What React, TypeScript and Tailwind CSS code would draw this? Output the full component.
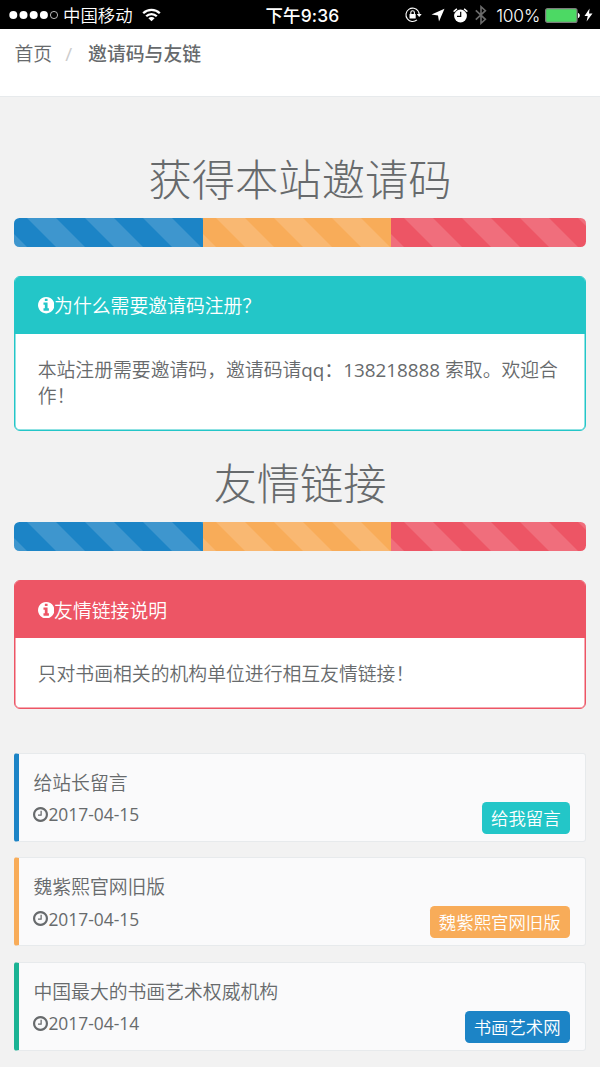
import React from "react";
import { clsx } from "clsx";

type Tone = "teal" | "red" | "orange" | "blue" | "green";

const toneBg: Record<Tone, string> = {
  teal: "bg-[#23c6c8]",
  red: "bg-[#ed5565]",
  orange: "bg-[#f8ac59]",
  blue: "bg-[#1c84c6]",
  green: "bg-[#1ab394]",
};

const toneBorder: Record<Tone, string> = {
  teal: "border-[#23c6c8] shadow-[inset_0_0_0_0.5px_#23c6c8]",
  red: "border-[#ed5565] shadow-[inset_0_0_0_0.5px_#ed5565]",
  orange: "border-l-[#f8ac59]",
  blue: "border-l-[#1c84c6]",
  green: "border-l-[#1ab394]",
};

const links: { title: string; date: string; action: string; edge: Tone; button: Tone }[] = [
  { title: "给站长留言", date: "2017-04-15", action: "给我留言", edge: "blue", button: "teal" },
  { title: "魏紫熙官网旧版", date: "2017-04-15", action: "魏紫熙官网旧版", edge: "orange", button: "orange" },
  { title: "中国最大的书画艺术权威机构", date: "2017-04-14", action: "书画艺术网", edge: "green", button: "blue" },
];

const InfoIcon = () => (
  <svg viewBox="0 128 1536 1536" className="size-[16.4px] shrink-0" fill="currentColor">
    <path d="M1024 1376v-160q0-14-9-23t-23-9h-96v-512q0-14-9-23t-23-9h-320q-14 0-23 9t-9 23v160q0 14 9 23t23 9h96v320h-96q-14 0-23 9t-9 23v160q0 14 9 23t23 9h448q14 0 23-9t9-23zm-128-896v-160q0-14-9-23t-23-9h-192q-14 0-23 9t-9 23v160q0 14 9 23t23 9h192q14 0 23-9t9-23zm640 416q0 209-103 385.5t-279.5 279.5-385.5 103-385.5-103-279.5-279.5-103-385.5 103-385.5 279.5-279.5 385.5-103 385.5 103 279.5 279.5 103 385.5z" />
  </svg>
);

const ClockIcon = () => (
  <svg viewBox="0 128 1536 1536" className="size-[15px] shrink-0" fill="currentColor">
    <path d="M896 544v448q0 14-9 23t-23 9h-320q-14 0-23-9t-9-23v-64q0-14 9-23t23-9h224v-352q0-14 9-23t23-9h64q14 0 23 9t9 23zm416 352q0-148-73-273t-198-198-273-73-273 73-198 198-73 273 73 273 198 198 273 73 273-73 198-198 73-273zm224 0q0 209-103 385.5t-279.5 279.5-385.5 103-385.5-103-279.5-279.5-103-385.5 103-385.5 279.5-279.5 385.5-103 385.5 103 279.5 279.5 103 385.5z" />
  </svg>
);

const StatusBar = () => (
  <div className="grid h-[29px] grid-cols-[1fr_auto_1fr] items-center bg-black pr-[7px] pl-[9px] font-['Inter','Noto_Sans_CJK_SC',sans-serif] text-[17.4px] leading-[29px] text-white">
    <div className="flex items-center">
      <svg width="50" height="10" viewBox="0 0 50 10" fill="#fff">
        <circle cx="4.3" cy="5" r="4" />
        <circle cx="14.5" cy="5" r="4" />
        <circle cx="24.7" cy="5" r="4" />
        <circle cx="34.9" cy="5" r="4" />
        <circle cx="45" cy="5" r="3.6" fill="none" stroke="#fff" strokeWidth="0.7" />
      </svg>
      <span className="ml-[4px] pt-[1px] font-[350]">中国移动</span>
      <svg width="19" height="14" viewBox="0 0 19 14" className="ml-[9px]" fill="none" stroke="#fff" strokeWidth="2.3">
        <path d="M1.2 5.2a11.8 11.8 0 0 1 16.6 0" />
        <path d="M4.2 8.3a7.5 7.5 0 0 1 10.6 0" />
        <path d="M9.5 13.3 6.4 10.3a4.4 4.4 0 0 1 6.2 0z" fill="#fff" stroke="none" />
      </svg>
    </div>
    <span className="pt-[1px] pl-[3px] font-medium tracking-[0.2px]">下午9:36</span>
    <div className="flex items-center justify-end">
      {/* rotation lock */}
      <svg width="17" height="16" viewBox="0 0 17 16" fill="none" stroke="#fff">
        <path d="M13.3 4.2A6.7 6.7 0 1 0 12 12.9" strokeWidth="1.1" />
        <path d="M13.3 4.2A6.7 6.7 0 0 1 14.2 8" strokeWidth="1.1" />
        <path d="M11.8 6.9h4.9l-2.5 3z" fill="#fff" stroke="none" />
        <rect x="4.5" y="7" width="6.2" height="4.6" rx="0.5" fill="#fff" stroke="none" />
        <path d="M5.8 7V5.5a1.8 1.8 0 0 1 3.6 0V7" strokeWidth="1.1" />
      </svg>
      <svg width="14" height="14" viewBox="0 0 14 14" className="ml-[9px]" fill="#fff">
        <path d="M13.5 0.8 8 13.5 7 7.5 0.5 6.6z" />
      </svg>
      <svg width="15" height="15" viewBox="0 0 15 15" className="ml-[8px]" fill="#fff">
        <circle cx="7.5" cy="8" r="6.4" />
        <path d="M0.6 3.6 3.9.9M14.4 3.6 11.1.9" stroke="#fff" strokeWidth="1.4" />
        <path d="M7.7 3.8v4.6H4" fill="none" stroke="#000" strokeWidth="1.2" />
      </svg>
      <svg width="12" height="20" viewBox="0 0 12 20" className="ml-[7px]" fill="none" stroke="#6b6b6b" strokeWidth="1.6">
        <path d="M.8 5.4 10.4 14.3 6 18.3V1.7l4.4 4L.8 14.6" />
      </svg>
      <span className="ml-[9px] pt-[1px] font-light tracking-[-0.2px]">100%</span>
      <svg width="36" height="15" viewBox="0 0 36 15" className="ml-[5px]">
        <rect x="0.6" y="0.6" width="31.4" height="13.8" rx="2" fill="#4cd964" stroke="#7c7c7c" strokeWidth="1.2" />
        <path d="M33 5c2.4.6 2.4 4.4 0 5z" fill="#fff" />
      </svg>
      <svg width="9" height="14" viewBox="0 0 9 14" className="ml-[3px]" fill="#fff">
        <path d="M5.6.5.5 8h3.2L2.6 13.5 8.5 5.6H5z" />
      </svg>
    </div>
  </div>
);

const segment =
  "bg-[linear-gradient(45deg,rgba(255,255,255,.15)_25%,transparent_25%,transparent_50%,rgba(255,255,255,.15)_50%,rgba(255,255,255,.15)_75%,transparent_75%,transparent)] bg-[length:58px_58px] bg-[position:13.5px_0px]";

const SectionTitle = ({ children }: { children: React.ReactNode }) => (
  <>
    <h1 className="h-[48px] text-center text-[43.3px] leading-[46px] font-light">{children}</h1>
    <div className="mt-[13px] flex h-[29px] overflow-hidden rounded-[5.5px]">
      <div className={clsx("w-[33%]", toneBg.blue, segment)} />
      <div className={clsx("w-[33%]", toneBg.orange, segment)} />
      <div className={clsx("w-[34%]", toneBg.red, segment)} />
    </div>
  </>
);

const Panel = ({ title, tone, children }: { title: string; tone: Tone; children: React.ReactNode }) => (
  <section className={clsx("mt-[29px] overflow-hidden rounded-[6px] border bg-white", toneBorder[tone])}>
    <div className={clsx("flex h-[57px] items-center px-[22.3px] text-white", toneBg[tone])}>
      <InfoIcon />
      <span className="pt-[2px]">{title}</span>
    </div>
    <p className="px-[22.3px] pt-[23px] pb-[20.5px] leading-[26.4px]">{children}</p>
  </section>
);

const App = () => {
  return (
    <div className="h-[1067px] overflow-hidden bg-[#f2f2f2] font-['Open_Sans','Noto_Sans_CJK_SC',sans-serif] text-[18.84px] font-[350] text-[#676a6c]">
      <StatusBar />

      <nav className="flex h-[68px] items-start border-b border-[#e7eaec] bg-white px-[14.5px] pt-[12px] leading-[27px]">
        <span>首页</span>
        <span className="px-[13px] font-normal text-[#cccccc]">/</span>
        <strong className="ml-[3px] font-medium">邀请码与友链</strong>
      </nav>

      <main className="px-[14.4px] pt-[60px]">
        <SectionTitle>获得本站邀请码</SectionTitle>
        <Panel title="为什么需要邀请码注册？" tone="teal">
          本站注册需要邀请码，邀请码请<span className="font-normal">qq</span>：
          <span className="font-normal">138218888</span> 索取。欢迎合作！
        </Panel>

        <div className="mt-[30px]">
          <SectionTitle>友情链接</SectionTitle>
          <Panel title="友情链接说明" tone="red">
            只对书画相关的机构单位进行相互友情链接！
          </Panel>
        </div>

        <ul className="mt-[43.6px] flex flex-col gap-[15.4px]">
          {links.map((link) => (
            <li
              key={link.title}
              className={clsx(
                "flex h-[89px] justify-between rounded-[3px] border border-l-[5px] border-[#e7eaec] bg-[#fafafb] pr-[15px] pl-[14px]",
                toneBorder[link.edge]
              )}
            >
              <div className="pt-[16px]">
                <div className="leading-[27px]">{link.title}</div>
                <div className="mt-[4.5px] flex items-center text-[17.4px] leading-[26px]">
                  <ClockIcon />
                  <span className="font-normal">{link.date}</span>
                </div>
              </div>
              <button
                className={clsx(
                  "mb-[7px] h-[32px] self-end rounded-[4.5px] px-[9px] text-[17.4px] leading-[32px] text-white",
                  toneBg[link.button]
                )}
              >
                {link.action}
              </button>
            </li>
          ))}
        </ul>
      </main>
    </div>
  );
};

export default App;
